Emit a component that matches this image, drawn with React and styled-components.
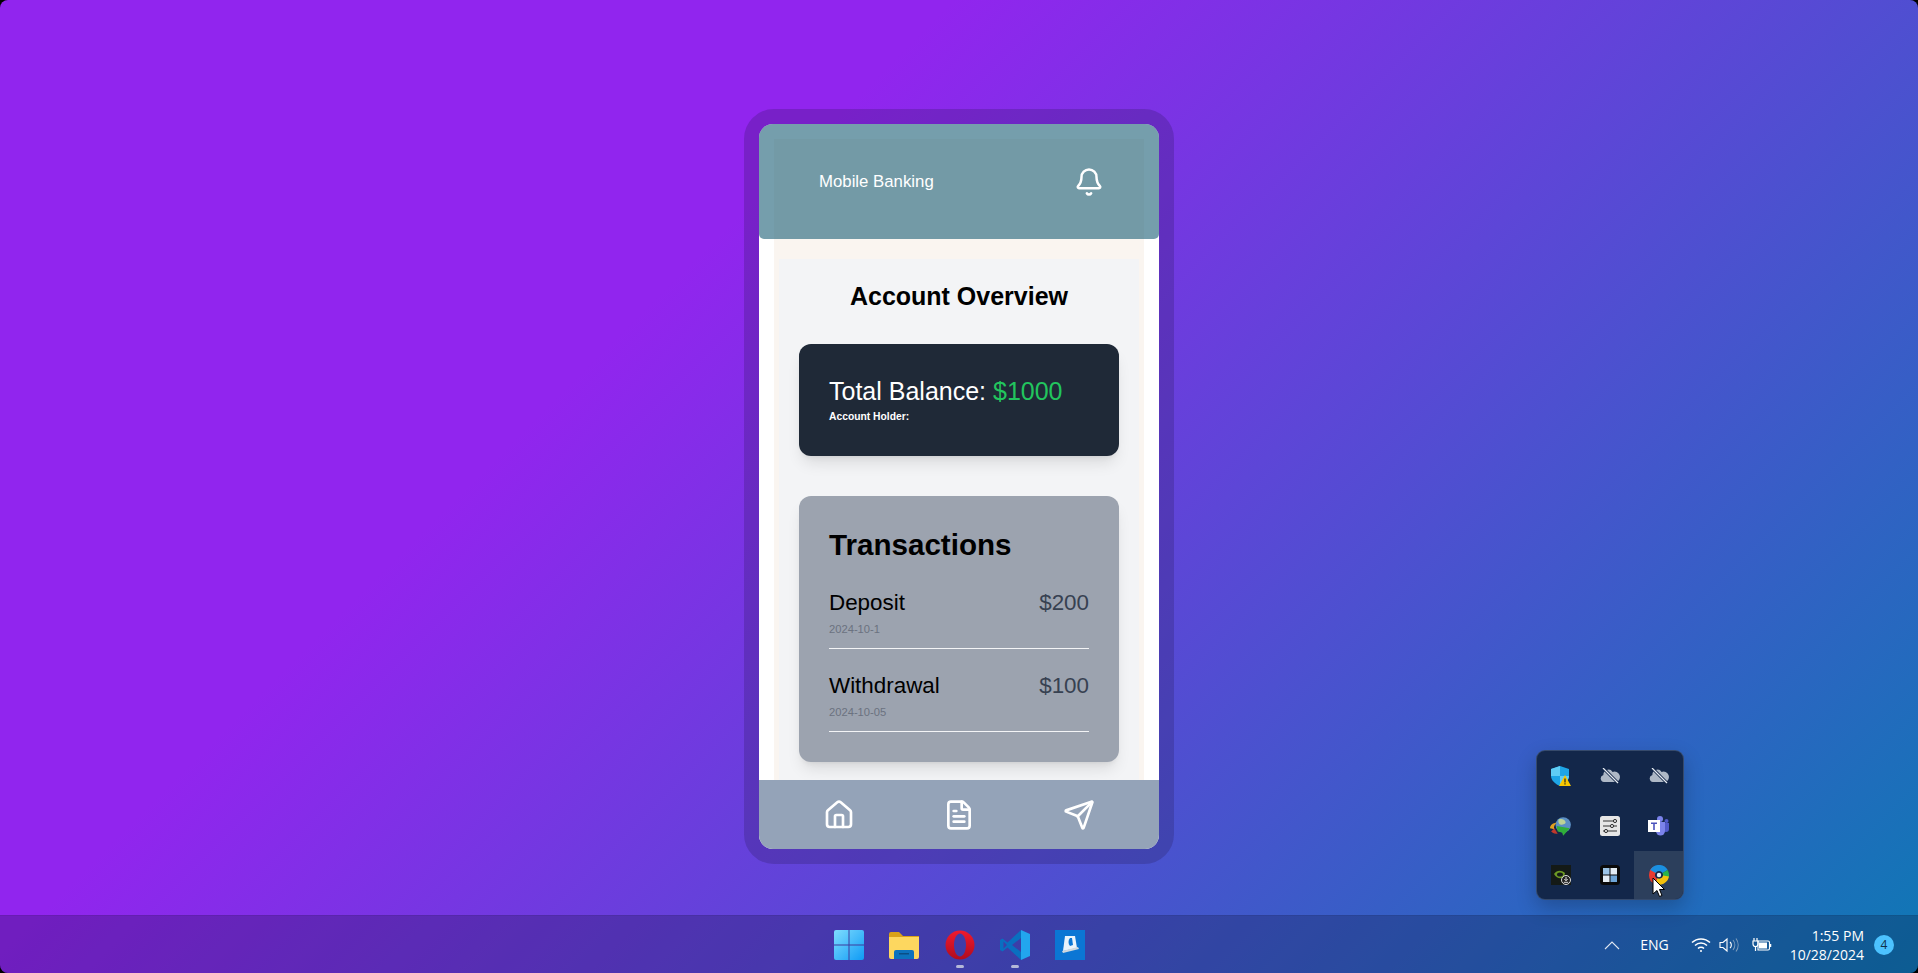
import React from 'react';
import styled, { createGlobalStyle } from 'styled-components';
import { Bell, House, FileText, Send } from 'lucide-react';

const GlobalStyle = createGlobalStyle`
  html, body {
    margin: 0;
    padding: 0;
    background: #000;
  }
  * {
    box-sizing: border-box;
  }
`;

const Desktop = styled.div`
  position: relative;
  display: flex;
  justify-content: center;
  align-items: center;
  height: 973px;
  overflow: hidden;
  border-radius: 8px;
  background: linear-gradient(135deg, #9125ee 33%, #0e78b4 100%);
  font-family: "Liberation Sans", Arial, sans-serif;
`;

const Phone = styled.div`
  width: 430px;
  height: 755px;
  border: 15px solid rgba(30, 20, 70, 0.22);
  border-radius: 30px;
  background-clip: padding-box;
`;

const Screen = styled.div`
  position: relative;
  height: 100%;
  overflow: hidden;
  border-radius: 14px;
  background: #fff;
`;

const Header = styled.header`
  position: absolute;
  top: 0;
  left: 0;
  right: 0;
  z-index: 2;
  display: flex;
  justify-content: space-between;
  align-items: center;
  height: 115px;
  padding: 0 55px 0 60px;
  border-radius: 0 0 5px 5px;
  background: rgba(25, 93, 117, 0.6);
  color: #fff;
  font-size: 16.8px;
`;

const Column = styled.div`
  height: 100%;
  margin: 15px 15px 0;
  padding: 120px 5px 0 5px;
  background: #faf5f0;
`;

const Panel = styled.main`
  height: 100%;
  padding: 20px;
  background: #f3f4f6;
`;

const Title = styled.h1`
  margin: 0 0 31px;
  font-size: 25px;
  line-height: 34px;
  text-align: center;
  color: #000;
`;

const BalanceCard = styled.section`
  height: 112px;
  margin-bottom: 40px;
  padding: 31px 30px 0;
  border-radius: 12px;
  background: #1f2937;
  color: #fff;
  box-shadow: 0 10px 15px -3px rgba(0, 0, 0, 0.1), 0 4px 6px -4px rgba(0, 0, 0, 0.1);
`;

const Balance = styled.div`
  margin-bottom: 3px;
  font-size: 25px;
  line-height: 32px;
`;

const Amount = styled.span`
  color: #22c55e;
`;

const Holder = styled.div`
  font-size: 10.3px;
  font-weight: bold;
  line-height: 14px;
`;

const TransactionsCard = styled.section`
  padding: 30px;
  border-radius: 12px;
  background: #9ca3af;
  box-shadow: 0 10px 15px -3px rgba(0, 0, 0, 0.1), 0 4px 6px -4px rgba(0, 0, 0, 0.1);
`;

const CardTitle = styled.h2`
  margin: 0 0 25px;
  font-size: 29.6px;
  line-height: 38px;
  color: #000;
`;

const List = styled.div`
  display: flex;
  flex-direction: column;
  gap: 23px;
`;

const Row = styled.div`
  padding-bottom: 12px;
  border-bottom: 1px solid #f3f4f6;
`;

const RowTop = styled.div`
  display: flex;
  justify-content: space-between;
  margin-bottom: 5px;
  font-size: 22.4px;
  line-height: 28px;
  color: #000;
`;

const Price = styled.span`
  color: #374151;
`;

const DateText = styled.div`
  font-size: 11.2px;
  line-height: 14px;
  color: #6b7280;
`;

const BottomNav = styled.nav`
  position: absolute;
  left: 0;
  right: 0;
  bottom: 0;
  z-index: 2;
  display: flex;
  justify-content: space-between;
  align-items: center;
  height: 69px;
  padding: 0 64px;
  background: #94a3b8;
  color: #fff;
`;

const Taskbar = styled.footer`
  position: absolute;
  left: 0;
  right: 0;
  bottom: 0;
  display: grid;
  grid-template-columns: 1fr auto 1fr;
  align-items: center;
  height: 58px;
  border-top: 1px solid rgba(0, 0, 0, 0.06);
  background: rgba(10, 10, 40, 0.24);
  color: #fff;
  font-family: "Open Sans", "Noto Sans", sans-serif;
`;

const Apps = styled.div`
  grid-column: 2;
  display: flex;
  gap: 25.25px;
  padding-left: 1px;
`;

const AppSlot = styled.div`
  position: relative;
  width: 30px;
  height: 30px;
  &::after {
    content: '';
    display: ${(p) => (p.$open ? 'block' : 'none')};
    position: absolute;
    left: 11px;
    bottom: -8px;
    width: 8px;
    height: 3px;
    border-radius: 2px;
    background: #b4b8d8;
  }
`;

const SystemTray = styled.div`
  grid-column: 3;
  display: flex;
  justify-content: flex-end;
  align-items: center;
  padding-right: 24px;
`;

const TrayIcons = styled.div`
  display: flex;
  align-items: center;
  gap: 8px;
`;

const Lang = styled.span`
  margin: 0 22px 0 20px;
  font-size: 14px;
`;

const Clock = styled.div`
  margin: 0 10px 0 18px;
  font-size: 14px;
  line-height: 19px;
  text-align: right;
`;

const Badge = styled.span`
  display: flex;
  justify-content: center;
  align-items: center;
  width: 20px;
  height: 20px;
  border-radius: 50%;
  background: #4cc2ff;
  color: #10304a;
  font-size: 12px;
`;

const TrayPopup = styled.div`
  position: absolute;
  left: 1536px;
  top: 750px;
  display: grid;
  grid-template-columns: repeat(3, 1fr);
  grid-template-rows: 50px 50px 1fr;
  width: 148px;
  height: 150px;
  overflow: hidden;
  border: 1px solid rgba(120, 140, 170, 0.35);
  border-radius: 9px;
  background: #13274a;
  box-shadow: 0 8px 20px rgba(0, 0, 0, 0.22);
`;

const TrayCell = styled.div`
  display: flex;
  justify-content: center;
  align-items: center;
  background: ${(p) => (p.$hover ? '#2c3f5c' : 'transparent')};
`;

const Pointer = styled.svg`
  position: absolute;
  left: 1652px;
  top: 877px;
`;

const WindowsLogo = () => (
  <svg width="30" height="30" viewBox="0 0 30 30">
    <defs>
      <linearGradient id="win" x1="0" y1="0" x2="1" y2="1">
        <stop offset="0" stopColor="#7fdcff" />
        <stop offset="1" stopColor="#0f9bf5" />
      </linearGradient>
    </defs>
    <rect width="30" height="30" fill="url(#win)" rx="2" />
    <path d="M14.5 0h1v30h-1zM0 14.5h30v1H0z" fill="#3f3d9e" />
  </svg>
);

const FolderIcon = () => (
  <svg width="30" height="30" viewBox="0 0 30 30">
    <path d="M0 4a2 2 0 0 1 2-2h8l4 4h16v6H0z" fill="#d9a21a" />
    <path d="M0 7h30v20a2 2 0 0 1-2 2H2a2 2 0 0 1-2-2z" fill="#fdd75f" />
    <path d="M5 22a2 2 0 0 1 2-2h16a2 2 0 0 1 2 2v7H5z" fill="#0d72bd" />
    <rect x="10" y="23" width="10" height="1.5" fill="#0a4e85" />
  </svg>
);

const OperaIcon = () => (
  <svg width="30" height="30" viewBox="0 0 30 30">
    <defs>
      <linearGradient id="opera" x1="0" y1="0" x2="0" y2="1">
        <stop offset="0" stopColor="#f01a2e" />
        <stop offset="1" stopColor="#b00c1f" />
      </linearGradient>
    </defs>
    <path
      fillRule="evenodd"
      d="M15 .5a14.500 14.500 0 1 0 0 29 14.500 14.500 0 0 0 0-29zM15 3.500c3.300 0 6 5.100 6 11.500s-2.700 11.500-6 11.500S9 21.400 9 15s2.700-11.500 6-11.500z"
      fill="url(#opera)"
    />
  </svg>
);

const VsCodeIcon = () => (
  <svg width="30" height="30" viewBox="0 0 30 30">
    <path
      fillRule="evenodd"
      d="M21 0L7.500 12.500 2.500 8.500 0 10v10l2.500 1.500 5-4L21 30v-8l-9-7 9-7zM3.500 11.500L7 15l-3.500 3.500z"
      fill="#0a6fc0"
    />
    <path d="M21 0l9 4v22l-9 4z" fill="#22a6ee" />
  </svg>
);

const NotesIcon = () => (
  <svg width="30" height="30" viewBox="0 0 30 30">
    <rect width="30" height="30" fill="#0b76d4" />
    <path d="M10 6h10l2 12-14 3z" fill="#eaf3fb" />
    <path d="M15 8c-2 2-2 6 0 8l3-1-1-7z" fill="#0b76d4" />
    <path d="M7 21l16-4 1 2-16 4z" fill="#cfd8de" />
  </svg>
);

const ShieldIcon = () => (
  <svg width="20" height="20" viewBox="0 0 20 20">
    <path d="M9 0l9 3v7c0 4-4 8-9 10-5-2-9-6-9-10V3z" fill="#1ea5e6" />
    <path d="M9 0v10H0V3zM9 10h9c0 4-4 8-9 10z" fill="#5fcdf5" />
    <path d="M14 9l6 11H8z" fill="#f7c600" />
    <path d="M13.4 12.5h1.2v4h-1.2zM13.4 17.3h1.2v1.2h-1.2z" fill="#222" />
  </svg>
);

const CloudOffIcon = () => (
  <svg width="20" height="16" viewBox="0 0 20 16">
    <path d="M4 14a3.5 3.5 0 0 1-.6-6.9A5 5 0 0 1 12.6 4 4.2 4.2 0 0 1 16.5 14z" fill="#aeb8c6" />
    <path d="M3 0l15 15" stroke="#13274a" strokeWidth="3" />
    <path d="M3 0l15 15" stroke="#e8edf3" strokeWidth="1.2" />
  </svg>
);

const GlobeArrowIcon = () => (
  <svg width="22" height="21" viewBox="0 0 20 19">
    <circle cx="12" cy="8" r="7" fill="#5b8fc4" />
    <path d="M8 3c3-1 5 0 6 2s-2 3-4 3-3-3-2-5z" fill="#bcd296" />
    <path d="M0 11c0-3 3-5 6-5-2 2-3 4-2 6z" fill="#e0a020" />
    <path d="M1 14c2 2 4 2 6 2l-3-5z" fill="#c0392b" />
    <path d="M6 9l12 2-6 7-1-3-4-1z" fill="#2fae3a" />
  </svg>
);

const SlidersIcon = () => (
  <svg width="20" height="20" viewBox="0 0 20 20">
    <rect width="20" height="20" rx="2.5" fill="#e6e6e6" />
    <path d="M3 5h14M3 10h14M3 15h14" stroke="#333" strokeWidth="1" />
    <circle cx="15" cy="5" r="1.6" fill="#ddd" stroke="#333" />
    <circle cx="12" cy="10" r="1.6" fill="#ddd" stroke="#333" />
    <circle cx="6" cy="15" r="1.6" fill="#ddd" stroke="#333" />
  </svg>
);

const TeamsIcon = () => (
  <svg width="21" height="20" viewBox="0 0 21 20">
    <circle cx="12" cy="3" r="3" fill="#7b83eb" />
    <circle cx="18.5" cy="5" r="2" fill="#5059c9" />
    <path d="M15 7h6v6a3 3 0 0 1-6 0z" fill="#5059c9" />
    <path d="M8 6h9v9a4.5 4.5 0 0 1-9 0z" fill="#7b83eb" />
    <rect y="4" width="12" height="12" fill="#fff" />
    <path d="M3 6.5h6v1.5H6.8v6H5.2V8H3z" fill="#4b53bc" />
  </svg>
);

const NvidiaIcon = () => (
  <svg width="20" height="20" viewBox="0 0 20 20">
    <rect width="20" height="20" fill="#141a17" />
    <path d="M3 9c3-4 7-4 11-1l-1 4c-3 2-7 2-10-3z" fill="#6d9a24" />
    <ellipse cx="9" cy="9.5" rx="3" ry="2" fill="#141a17" />
    <circle cx="15" cy="15" r="4.5" fill="#222" stroke="#ddd" />
    <path d="M15 12v3.5M13.3 14l1.7 1.8 1.7-1.8M12.8 17.3h4.4" stroke="#ddd" fill="none" />
  </svg>
);

const PanesIcon = () => (
  <svg width="20" height="20" viewBox="0 0 20 20">
    <rect width="20" height="20" rx="3.5" fill="#0a0a0a" />
    <rect x="3" y="3" width="6.5" height="6.5" fill="#9cc4e6" />
    <rect x="10.5" y="3" width="6.5" height="6.5" fill="#e3ecf3" />
    <rect x="3" y="10.5" width="6.5" height="6.5" fill="#e3ecf3" />
    <rect x="10.5" y="10.5" width="6.5" height="6.5" fill="#6ea5d6" />
  </svg>
);

const RingIcon = () => (
  <svg width="20" height="20" viewBox="0 0 20 20" fill="none" strokeWidth="6">
    <circle cx="10" cy="10" r="4" fill="#13274a" stroke="none" />
    <path d="M3 10a7 7 0 0 1 3-5.700" stroke="#ea3b30" />
    <path d="M3.900 6.500a7 7 0 0 1 12.200 0" stroke="#1a8fe0" />
    <path d="M16 6.500a7 7 0 0 1 .8 5.500" stroke="#2bb24c" />
    <path d="M17 11a7 7 0 0 1-10 5" stroke="#f4c20d" />
    <path d="M7 16.500a7 7 0 0 1-4-6.500" stroke="#e53a2f" />
    <circle cx="10" cy="10" r="2.200" fill="#e8eef5" stroke="none" />
  </svg>
);

const TrayArrow = () => (
  <svg width="16" height="10" viewBox="0 0 16 10" fill="none" stroke="#dfe6f0" strokeWidth="1.1">
    <path d="M1 9l7-7 7 7" />
  </svg>
);

const WifiIcon = () => (
  <svg width="20" height="16" viewBox="0 0 20 16" fill="none" stroke="#fff" strokeWidth="1.5">
    <path d="M1 5.5a13 13 0 0 1 18 0M4 8.5a8.6 8.6 0 0 1 12 0M7 11.5a4.2 4.2 0 0 1 6 0" />
    <circle cx="10" cy="14" r="1" fill="#fff" stroke="none" />
  </svg>
);

const SpeakerIcon = () => (
  <svg width="20" height="16" viewBox="0 0 20 16" fill="none" stroke="#fff" strokeWidth="1.1">
    <path d="M1 5.5h3L8 2v12l-4-3.5H1z" />
    <path d="M11 5a4 4 0 0 1 0 6" />
    <path d="M14 3a8 8 0 0 1 0 10M17 1.500a11 11 0 0 1 0 13" stroke="#7d9cbc" />
  </svg>
);

const BatteryIcon = () => (
  <svg width="25" height="16" viewBox="-5 0 25 16" fill="none">
    <path d="M6 4h10a1.500 1.500 0 0 1 1.500 1.500v6A1.500 1.500 0 0 1 16 13H6z" stroke="#fff" strokeWidth="1.1" />
    <rect x="7" y="5.500" width="8" height="6" fill="#fff" />
    <path d="M18.500 7v3" stroke="#fff" strokeWidth="1.5" />
    <path d="M1 4h5v3a2.500 2.500 0 0 1-5 0zM2 1v3M5 1v3M3.500 9.500V14" stroke="#fff" strokeWidth="1.2" />
  </svg>
);

function App() {
  return (
    <>
      <GlobalStyle />
      <Desktop>
        <Phone>
          <Screen>
            <Header>
              <span>Mobile Banking</span>
              <Bell size={30} strokeWidth={2} />
            </Header>
            <Column>
              <Panel>
                <Title>Account Overview</Title>
                <BalanceCard>
                  <Balance>
                    Total Balance: <Amount>$1000</Amount>
                  </Balance>
                  <Holder>Account Holder:</Holder>
                </BalanceCard>
                <TransactionsCard>
                  <CardTitle>Transactions</CardTitle>
                  <List>
                    <Row>
                      <RowTop>
                        <span>Deposit</span>
                        <Price>$200</Price>
                      </RowTop>
                      <DateText>2024-10-1</DateText>
                    </Row>
                    <Row>
                      <RowTop>
                        <span>Withdrawal</span>
                        <Price>$100</Price>
                      </RowTop>
                      <DateText>2024-10-05</DateText>
                    </Row>
                  </List>
                </TransactionsCard>
              </Panel>
            </Column>
            <BottomNav>
              <House size={32} strokeWidth={2} />
              <FileText size={32} strokeWidth={2} />
              <Send size={32} strokeWidth={2} />
            </BottomNav>
          </Screen>
        </Phone>

        <TrayPopup>
          <TrayCell><ShieldIcon /></TrayCell>
          <TrayCell><CloudOffIcon /></TrayCell>
          <TrayCell><CloudOffIcon /></TrayCell>
          <TrayCell><GlobeArrowIcon /></TrayCell>
          <TrayCell><SlidersIcon /></TrayCell>
          <TrayCell><TeamsIcon /></TrayCell>
          <TrayCell><NvidiaIcon /></TrayCell>
          <TrayCell><PanesIcon /></TrayCell>
          <TrayCell $hover><RingIcon /></TrayCell>
        </TrayPopup>
        <Pointer width="13" height="21" viewBox="0 0 13 21">
          <path d="M1 1v16l4-3.500 2.500 6 2.500-1-2.500-6h5z" fill="#fff" stroke="#000" strokeWidth="1" />
        </Pointer>

        <Taskbar>
          <Apps>
            <AppSlot><WindowsLogo /></AppSlot>
            <AppSlot><FolderIcon /></AppSlot>
            <AppSlot $open><OperaIcon /></AppSlot>
            <AppSlot $open><VsCodeIcon /></AppSlot>
            <AppSlot><NotesIcon /></AppSlot>
          </Apps>
          <SystemTray>
            <TrayArrow />
            <Lang>ENG</Lang>
            <TrayIcons>
              <WifiIcon />
              <SpeakerIcon />
              <BatteryIcon />
            </TrayIcons>
            <Clock>
              1:55 PM
              <br />
              10/28/2024
            </Clock>
            <Badge>4</Badge>
          </SystemTray>
        </Taskbar>
      </Desktop>
    </>
  );
}

export default App;
